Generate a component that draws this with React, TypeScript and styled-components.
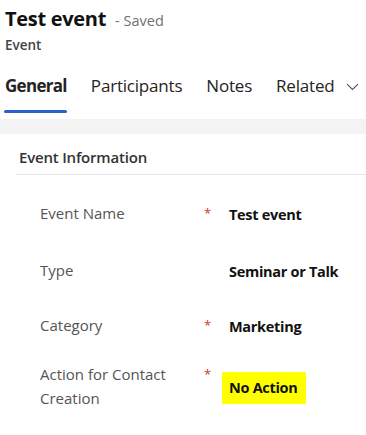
import React from "react";
import styled, { createGlobalStyle } from "styled-components";

const Global = createGlobalStyle`
  html, body { margin: 0; padding: 0; background: #ffffff; }
  body { font-family: "Segoe UI", "Open Sans", "Noto Sans", sans-serif; color: #242424; }
  * { box-sizing: border-box; }
`;

const Page = styled.div`
  width: 366px;
  height: 435px;
  overflow: hidden;
  display: flex;
  flex-direction: column;
  background: #ffffff;
`;

const Header = styled.div`
  padding: 5px 0 0 5px;
  display: flex;
  flex-direction: column;
`;

const TitleRow = styled.div`
  display: flex;
  align-items: baseline;
  gap: 9px;
`;

const Title = styled.h1`
  margin: 0;
  font-size: 20px;
  line-height: 28px;
  font-weight: 700;
  color: #111111;
  letter-spacing: -0.3px;
`;

const Saved = styled.span`
  font-size: 14.5px;
  color: #707070;
`;

const EntityName = styled.div`
  font-size: 13.5px;
  font-weight: 600;
  color: #444444;
  line-height: 20px;
  margin-top: 2px;
`;

const Tabs = styled.div`
  display: flex;
  gap: 24px;
  padding: 0 0 0 5px;
  margin-top: 17px;
  height: 41px;
`;

const Tab = styled.div<{ $active?: boolean }>`
  position: relative;
  font-size: 17px;
  line-height: 28px;
  font-weight: ${(p) => (p.$active ? 700 : 400)};
  color: #242424;
  display: flex;
  align-items: flex-start;
  gap: 12px;
  letter-spacing: ${(p) => (p.$active ? "-0.7px" : "-0.2px")};
  &::after {
    content: "";
    display: ${(p) => (p.$active ? "block" : "none")};
    position: absolute;
    left: -1px;
    right: 0;
    bottom: 0;
    height: 3px;
    border-radius: 2px;
    background: #2b5fc9;
  }
`;

const Chevron = styled.svg`
  margin-top: 11px;
`;

const Band = styled.div`
  height: 15px;
  background: #f3f3f3;
  margin-top: 6px;
`;

const Card = styled.section`
  margin-left: 16px;
  display: flex;
  flex-direction: column;
`;

const CardHeader = styled.h2`
  margin: 0;
  height: 41px;
  padding: 12px 0 0 3px;
  font-size: 15px;
  line-height: 22px;
  font-weight: 600;
  color: #333333;
  letter-spacing: -0.2px;
  border-bottom: 1px solid #e6e6e6;
`;

const Fields = styled.div`
  display: flex;
  flex-direction: column;
  padding-left: 24px;
`;

const Row = styled.div<{ $top: number }>`
  display: grid;
  grid-template-columns: 163px 26px 1fr;
  align-items: start;
  margin-top: ${(p) => p.$top}px;
`;

const Label = styled.div`
  font-size: 15px;
  line-height: 24px;
  color: #555555;
`;

const Required = styled.span`
  color: #d13438;
  font-size: 13px;
  line-height: 14px;
  padding-left: 1px;
`;

const Value = styled.div<{ $highlight?: boolean }>`
  justify-self: start;
  font-size: 14.5px;
  line-height: 24px;
  font-weight: 700;
  color: #111111;
  letter-spacing: -0.3px;
  height: ${(p) => (p.$highlight ? "32px" : "auto")};
  padding: ${(p) => (p.$highlight ? "4px 8px 4px 7px" : "2px 0 0 0")};
  margin-left: ${(p) => (p.$highlight ? "-7px" : "0")};
  margin-top: ${(p) => (p.$highlight ? "10px" : "0")};
  background: ${(p) => (p.$highlight ? "#ffff00" : "transparent")};
`;

const fields = [
  { label: "Event Name", required: true, value: "Test event", top: 26 },
  { label: "Type", required: false, value: "Seminar or Talk", top: 31 },
  { label: "Category", required: true, value: "Marketing", top: 29 },
  { label: "Action for Contact Creation", required: true, value: "No Action", top: 23, highlight: true },
];

export default function App() {
  return (
    <Page>
      <Global />
      <Header>
        <TitleRow>
          <Title>Test event</Title>
          <Saved>- Saved</Saved>
        </TitleRow>
        <EntityName>Event</EntityName>
      </Header>
      <Tabs>
        <Tab $active>General</Tab>
        <Tab>Participants</Tab>
        <Tab>Notes</Tab>
        <Tab>
          Related
          <Chevron width="13" height="8" viewBox="0 0 13 8" fill="none">
            <path d="M1 1.2 L6.5 6.5 L12 1.2" stroke="#555" strokeWidth="1.1" />
          </Chevron>
        </Tab>
      </Tabs>
      <Band />
      <Card>
        <CardHeader>Event Information</CardHeader>
        <Fields>
          {fields.map((f) => (
            <Row key={f.label} $top={f.top}>
              <Label>{f.label}</Label>
              <div>{f.required && <Required>*</Required>}</div>
              <Value $highlight={f.highlight}>{f.value}</Value>
            </Row>
          ))}
        </Fields>
      </Card>
    </Page>
  );
}
